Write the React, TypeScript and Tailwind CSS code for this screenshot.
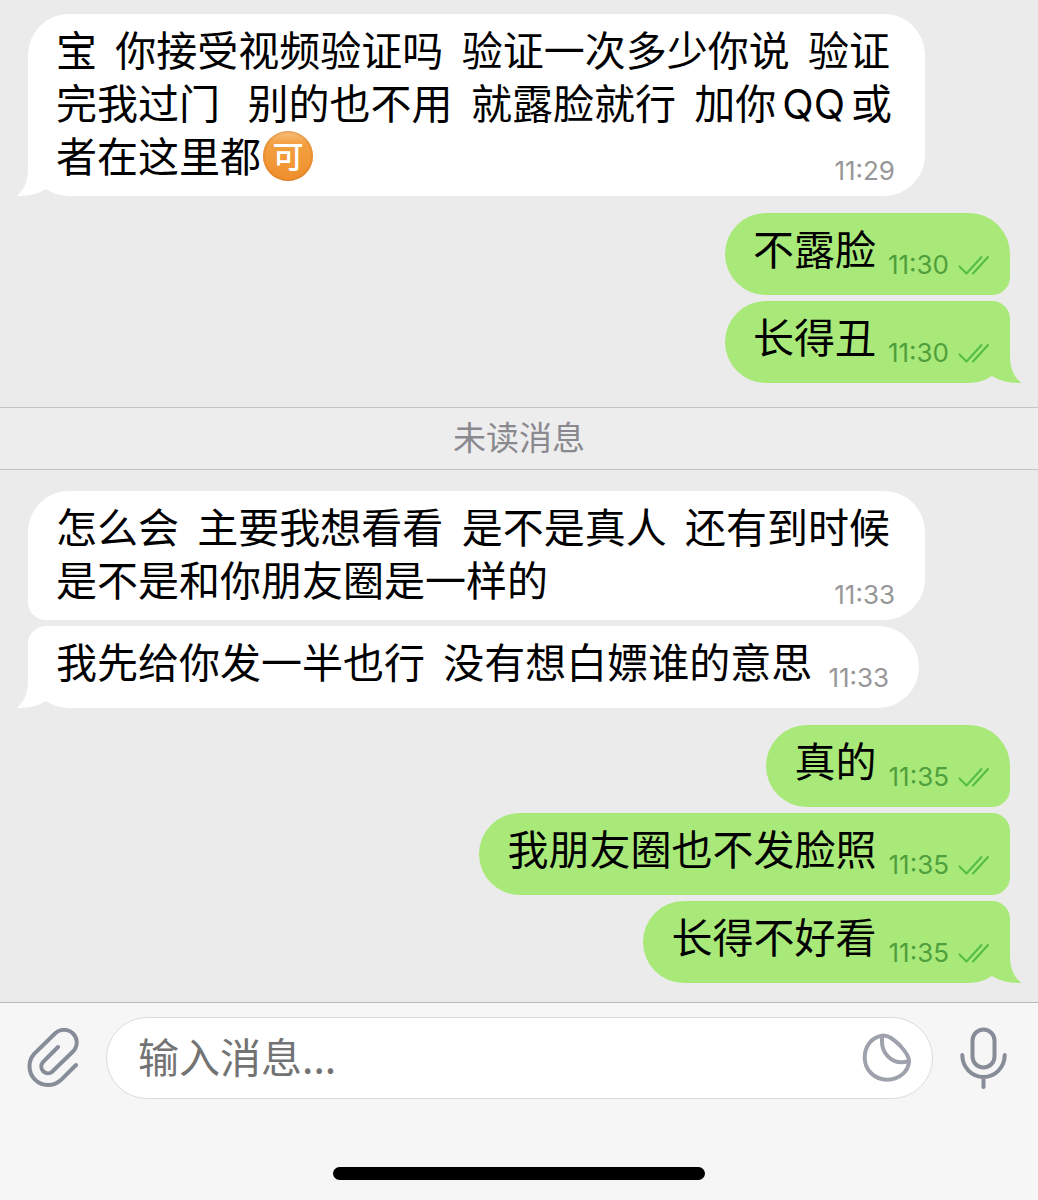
import React from "react";

type Message = {
  text: React.ReactNode;
  time: string;
  corners: string;
  tail?: boolean;
  long?: boolean;
};

const CJK = "font-['Noto_Sans_CJK_SC',sans-serif]";
const LATIN = "font-['Inter',sans-serif]";

function Tail({ side }: { side: "left" | "right" }) {
  return (
    <svg
      width="29"
      height="41"
      viewBox="0 0 29 41"
      aria-hidden="true"
      className={
        side === "right"
          ? "absolute bottom-0 -right-[11px] text-[#a9e97a]"
          : "absolute bottom-0 -left-[11px] -scale-x-100 text-white"
      }
    >
      <path
        fill="currentColor"
        d="M0 0H18V13C18 25 21 34 28.600 40.300Q29.200 41 28 41C18 41 8 39 1 34.500L0 34Z"
      />
    </svg>
  );
}

function Ticks() {
  return (
    <svg width="31" height="20" viewBox="0 0 31 20" fill="none" stroke="#54bd44" strokeWidth="2" strokeLinecap="round" strokeLinejoin="round" role="img" aria-label="已读">
      <path d="M1.500 11.500L8.500 18.500L23.500 2" />
      <path d="M15 18.500L30 2" />
    </svg>
  );
}

function Incoming({ text, time, corners, tail, long }: Message) {
  const stamp = `${LATIN} text-[26px] leading-[30px] text-[#979797]`;
  return (
    <li className={`relative w-fit max-w-[897px] bg-white pl-7 pt-2 ${corners} ${long ? "pr-[30px] pb-[10px]" : "flex items-end gap-4 pr-[30px] pb-[21px]"}`}>
      <p className="whitespace-pre-wrap text-[41px] leading-[53px] text-black">
        {text}
        {long && <time className={`${stamp} float-right mt-7`}>{time}</time>}
      </p>
      {!long && <time className={`${stamp} -mb-[6px]`}>{time}</time>}
      {tail && <Tail side="left" />}
    </li>
  );
}

function Outgoing({ text, time, corners, tail }: Message) {
  return (
    <li className={`relative flex w-fit items-end self-end bg-[#a9e97a] pt-2 pr-[21px] pb-[21px] pl-7 ${corners}`}>
      <p className="text-[41px] leading-[53px] text-black">{text}</p>
      <span className="-mb-[6px] ml-3 flex items-center gap-[9px]">
        <time className={`${LATIN} text-[26px] leading-[30px] text-[#4fa03c]`}>{time}</time>
        <Ticks />
      </span>
      {tail && <Tail side="right" />}
    </li>
  );
}

function OkEmoji() {
  return (
    <span
      role="img"
      className="mt-[3px] ml-[2px] inline-flex size-[50px] items-center justify-center rounded-full bg-linear-to-b from-[#f7c07c] via-[#f3a040] via-25% to-[#ef8f2c] pb-1 align-top text-[31px] leading-none font-medium text-white shadow-[inset_0_0_3px_#c96f1c]"
    >
      可
    </span>
  );
}

const ALL = "rounded-[41px]";
const LEFT_FIRST = "rounded-[41px] rounded-bl-[18px]";
const LEFT_LAST = "rounded-[41px] rounded-tl-[18px]";
const RIGHT_FIRST = "rounded-[41px] rounded-br-[18px]";
const RIGHT_MIDDLE = "rounded-l-[41px] rounded-r-[18px]";
const RIGHT_LAST = "rounded-[41px] rounded-tr-[18px]";

export default function App() {
  return (
    <div className={`${CJK} flex min-h-screen flex-col bg-[#ebebeb]`} lang="zh-CN">
      <main className="grow pt-[14px] pb-[19px]">
        <ul className="flex flex-col gap-[6px] px-7">
          <Incoming
            long
            tail
            corners={ALL}
            time="11:29"
            text={
              <>
                {"宝  你接受视频验证吗  验证一次多少你说  验证完我过门   别的也不用  就露脸就行  加你"}
                <span className={`${LATIN} mx-[6px] leading-none`}>QQ</span>
                {"或者在这里都"}
                <OkEmoji />
              </>
            }
          />
        </ul>
        <ul className="mt-[17px] flex flex-col gap-[6px] px-7">
          <Outgoing text="不露脸" time="11:30" corners={RIGHT_FIRST} />
          <Outgoing text="长得丑" time="11:30" corners={RIGHT_LAST} tail />
        </ul>

        <h2 className="mt-6 mb-[21px] border-y border-[#c4c4c4] bg-[#ededed] pb-1 text-center text-[33px] leading-[57px] font-normal text-[#8a898f]">
          未读消息
        </h2>

        <ul className="flex flex-col gap-[6px] px-7">
          <Incoming long corners={LEFT_FIRST} time="11:33" text="怎么会  主要我想看看  是不是真人  还有到时候是不是和你朋友圈是一样的" />
          <Incoming tail corners={LEFT_LAST} time="11:33" text="我先给你发一半也行  没有想白嫖谁的意思" />
        </ul>
        <ul className="mt-[17px] flex flex-col gap-[6px] px-7">
          <Outgoing text="真的" time="11:35" corners={RIGHT_FIRST} />
          <Outgoing text="我朋友圈也不发脸照" time="11:35" corners={RIGHT_MIDDLE} />
          <Outgoing text="长得不好看" time="11:35" corners={RIGHT_LAST} tail />
        </ul>
      </main>

      <footer className="border-t border-[#b9b9b9] bg-[#f6f6f6] pb-5">
        <form className="flex items-center gap-[27px] pt-[14px] pr-[31px] pl-[27px]" onSubmit={(e) => e.preventDefault()}>
          <button type="button" aria-label="附件" className="shrink-0 text-[#868d98]">
            <svg width="52" height="60" viewBox="0 0 52 60" fill="none" stroke="currentColor" strokeWidth="4" strokeLinecap="round">
              <path d="M31 19L15.700 34.400A6.700 6.700 0 0 0 25.100 43.800L46 23.500A12.700 12.700 0 0 0 28 5.500L7.200 25.900A18.700 18.700 0 0 0 33.600 52.300L49 37" />
            </svg>
          </button>
          <div className="flex h-[82px] min-w-0 grow items-center rounded-full border border-[#dadbe2] bg-white pr-5 pl-[31px]">
            <input
              aria-label="输入消息"
              placeholder="输入消息..."
              className="min-w-0 grow bg-transparent pb-[6px] text-[41px] leading-[53px] text-black outline-none placeholder:text-[#737373]"
            />
            <button type="button" aria-label="贴纸" className="shrink-0 text-[#9da2ac]">
              <svg width="50" height="50" viewBox="0 0 50 50" fill="none" stroke="currentColor" strokeWidth="4" strokeLinecap="round" strokeLinejoin="round">
                <path d="M20 2.700C10 4 2.700 13 2.700 24.500C2.700 37 12.500 46.700 25 46.700C37 46.700 46 39 47 28.700C47.400 24 44 19 38 12.500C31 6 26 1.800 20 2.700Z" />
                <path d="M20 3V9C20 20 29 29.500 40 29.300L46.500 28.500" />
              </svg>
            </button>
          </div>
          <button type="button" aria-label="语音" className="shrink-0 text-[#868d98]">
            <svg width="47" height="63" viewBox="0 0 47 63" fill="none" stroke="currentColor" strokeWidth="4" strokeLinecap="round">
              <rect x="12.500" y="2.500" width="22" height="38" rx="11" />
              <path d="M2.300 28A21.200 22 0 0 0 44.700 28M23.500 50V60" />
            </svg>
          </button>
        </form>
        <div className="mx-auto mt-[68px] h-[13px] w-[372px] max-w-full rounded-full bg-black" />
      </footer>
    </div>
  );
}
